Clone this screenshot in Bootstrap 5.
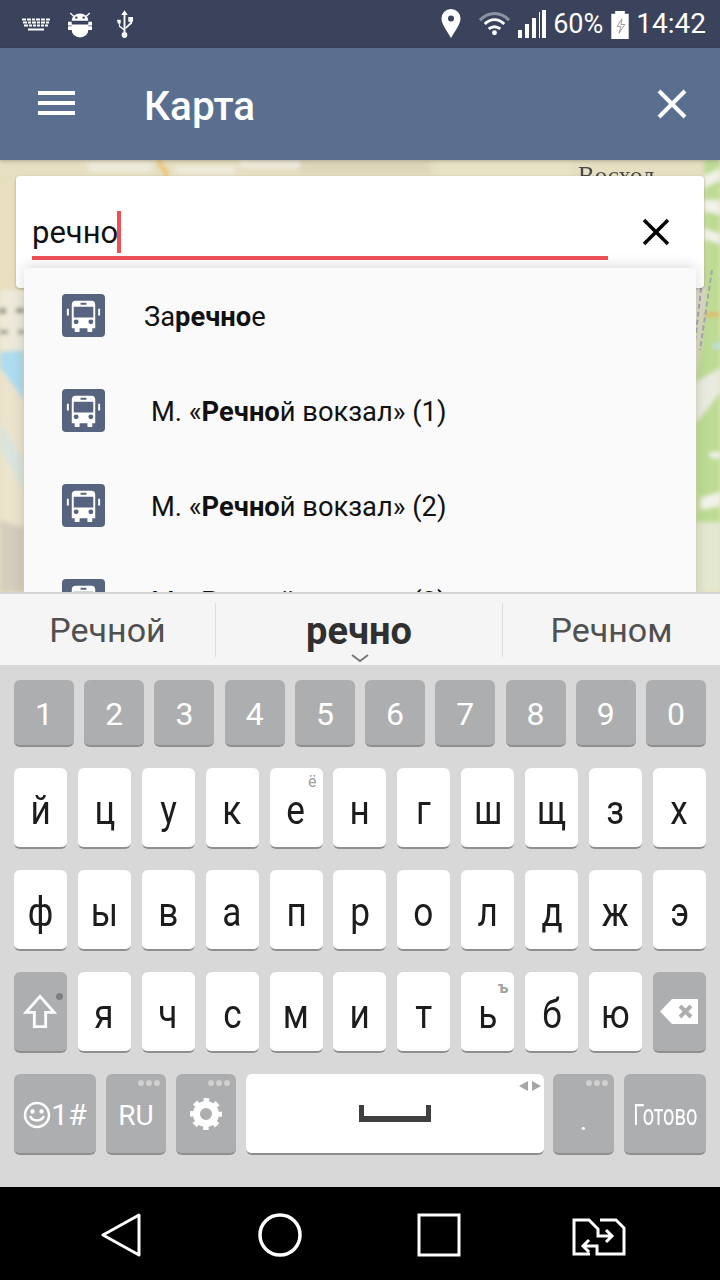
<!DOCTYPE html>
<html lang="ru"><head><meta charset="utf-8">
<link rel="stylesheet" href="https://cdn.jsdelivr.net/npm/bootstrap@5.3.0/dist/css/bootstrap.min.css">
<style>
html,body{margin:0;width:720px;height:1280px;overflow:hidden}
body{font-family:Roboto,sans-serif;background:#000}
.phone{width:720px;height:1280px;display:flex;flex-direction:column}
.statusbar{height:48px;background:#3b435c;color:#fff;padding:0 14px 0 22px;font-size:27px;flex:none}
.st-android{margin-left:18px}
.st-usb{margin-left:24px}
.st-pin{margin-right:17px}
.st-wifi{margin-right:7px}
.st-pct{margin:0 8px 0 7px}
.st-time{margin-left:7px;font-size:28px}
.appbar{height:112px;background:#5a6f90;color:#fff;flex:none;padding:0 33px 0 38px;position:relative;z-index:2;box-shadow:0 1px 4px rgba(0,0,0,.25)}
.appbar-title{font-size:40.500px;font-weight:500;margin-left:68px;line-height:1;padding-top:5px}
.mapzone{height:432px;flex:none;position:relative;overflow:hidden;background:#e6dfc0}
.mapart{position:absolute;inset:0;width:720px;height:432px}
.searchbox{position:absolute;left:16px;top:16px;width:688px;height:112px;background:#fff;border-radius:4px;box-shadow:0 1px 3px rgba(0,0,0,.25)}
.searchtext{position:absolute;left:16px;top:35px;font-size:31px;line-height:40px;color:#111}
.caret-bar{display:inline-block;width:4px;height:42px;background:#ee5056;vertical-align:-10px;margin-left:-1px}
.underline-bar{position:absolute;left:16px;top:80px;width:576px;height:4px;background:#ee5056}
.clear-x{position:absolute;left:626px;top:42px}
.suggest{position:absolute;left:24px;top:108px;width:672px;height:330px;background:#fafafa;border-radius:4px 4px 0 0;box-shadow:0 -2px 14px rgba(0,0,0,.14);padding:0;margin:0;flex-wrap:nowrap}
.sug-row{height:95px;flex:none;display:flex;align-items:center;padding:0 0 0 38px;border:0;background:transparent;font-size:27.300px;color:#111;border-radius:0}
.sug-row svg{flex:none;margin-top:-1px}
.sug-one{margin-left:39px;padding-top:4px}
.sug-two{margin-left:46px;padding-top:4px}
.predict{height:73px;background:#f5f5f5;border-top:2px solid #d4d4d4;flex:none;position:relative;color:#505050;font-size:34px}
.pred-cell{display:flex;align-items:center;justify-content:center;height:71px;padding-top:1px}
.pred-a{width:215px}
.pred-b{width:286px;font-weight:700;font-size:38px;color:#303030;padding-top:3px}
.pred-c{width:217px}
.pred-sep{width:1px;height:54px;background:#dedede;flex:none}
.pred-chev{position:absolute;left:351px;top:60px}
.kbd{height:522px;background:#d8d8d8;flex:none;padding-top:15px}
.keyrow{display:flex;height:81px;padding-left:14px}
.keyrow+.keyrow{margin-top:21.330px}
.keyrow.numrow{height:67px;gap:10.220px}
.numrow+.letrow.keyrow{margin-top:20.500px}
.kk{height:100%;flex:none;border-radius:6px;background:#fff;border-bottom:2px solid #8f8f8f;color:#1c1c1c;display:flex;align-items:center;justify-content:center;font-size:35px;position:relative;line-height:1}
.kk-g{background:#adaeb0;color:#fff}
.numrow .kk{width:60px;font-size:32px;padding-top:3px}
.letrow{gap:10.900px}
.letrow .kk{width:53px;padding-top:7px}
.lt{display:block;font-size:40px;transform:scaleX(.88)}
.botrow{gap:10px}
.bk-a{width:82px;font-size:30px;padding-top:2px}
.bk-b{width:60px;font-size:28px;padding-top:4px}
.bk-c{width:60px}
.bk-space{width:298px}
.bk-dot{width:61px;font-size:28px;padding-top:14px;margin-left:-1px}
.bk-go{width:82px;padding-top:3px}
.go-text{display:block;font-size:29px;transform:scaleX(.69);white-space:nowrap}
.corner{position:absolute;font-size:16px;color:#a0a0a0;top:6px;right:6px;line-height:1}
.corner-b{font-weight:700;top:8px}
.dots{position:absolute;top:6px;right:6px;display:flex;gap:2px}
.dots i{width:6px;height:6px;border-radius:50%;background:#d0d0d0;display:block}
.shift-ico{margin-top:-7px;margin-right:2px}
.shift-dot{position:absolute;right:4px;top:21px;width:7px;height:7px;border-radius:50%;background:#7f7f7f}
.back-ico{margin-top:-7px;margin-left:-1px}
.tri{position:absolute;right:3px;top:7px}
.navbarea{height:93px;background:#000;flex:none;position:relative}
.navico{position:absolute;top:26px}
.nv-a{left:101px}.nv-b{left:258px}.nv-c{left:417px}.nv-d{left:572px;top:31px}
</style></head><body>
<div class="phone">
<div class="statusbar d-flex align-items-center">
<svg width="28" height="15" viewBox="0 0 28 14" fill="#fff"><path d="M0 1h4v2H0zM5 1h4v2H5zM10 1h3v2h-3zM14 1h4v2h-4zM19 1h4v2h-4zM24 1h4v2h-4zM1 4h4v2H1zM6 4h3v2H6zM10 4h4v2h-4zM15 4h3v2h-3zM19 4h4v2h-4zM24 4h3v2h-3zM2 7h4v2H2zM7 7h3v2H7zM11 7h3v2h-3zM15 7h3v2h-3zM19 7h3v2h-3zM23 7h3v2h-3zM6 11h16v2H6z"/></svg>
<svg class="st-android" width="24" height="27" viewBox="0 0 26 28" fill="#fff"><path d="M3 1l4 4-1 1-4-4zM23 1l-4 4 1 1 4-4z"/><path d="M4 10a9 8 0 0 1 18 0z" /><path d="M0 11h4v3h18v-3h4v4h-4v1h4v4h-4a9 8 0 0 1-18 0H0v-4h4v-1H0z"/><circle cx="9" cy="6.500" r="1.300" fill="#3b435c"/><circle cx="17" cy="6.500" r="1.300" fill="#3b435c"/></svg>
<svg class="st-usb" width="17" height="29" viewBox="0 0 18 30" fill="#fff"><path d="M8 29V5H5.500L9 0l3.500 5H10v24z"/><circle cx="9" cy="26" r="3"/><path d="M1 10h4v4H4v2l5 4v2l-6-5v-3H2z" /><path d="M13 7h5v5h-1v2l-7 6v-2l5-5v-1h-2z"/></svg>
<div class="flex-grow-1"></div>
<svg class="st-pin" width="20" height="30" viewBox="0 0 20 30"><path fill="#fff" fill-rule="evenodd" d="M10 0a9.500 9.500 0 0 1 9.500 9.500C19.500 15 14 22 10 29 6 22 .5 15 .5 9.500A9.500 9.500 0 0 1 10 0zm0 6.500a3 3 0 1 0 0 6 3 3 0 0 0 0-6z"/></svg>
<svg class="st-wifi" width="33" height="26" viewBox="0 0 34 26" fill="none"><path d="M2 9C11 0 23 0 32 9" stroke="#8c93a4" stroke-width="3"/><path d="M7 13c6-6 14-6 20 0" stroke="#fff" stroke-width="3"/><path d="M11 18c4-3 8-3 12 0" stroke="#fff" stroke-width="3"/><circle cx="17" cy="22" r="2.500" fill="#fff"/></svg>
<svg width="28" height="28" viewBox="0 0 28 28" fill="#fff"><path d="M0 20h4v8H0zM7 14h4v14H7zM14 8h4v20h-4zM21 2h1v26h-1zM24 0h4v28h-4z"/></svg>
<span class="st-pct">60%</span>
<svg width="18" height="29" viewBox="0 0 18 30"><path fill="#fff" d="M4 1h10v3h4v26H0V4h4z"/><path fill="none" stroke="#9a9a9a" stroke-width="1" d="M11 9l-5 8h4l-2 7 6-9h-4z"/></svg>
<span class="st-time">14:42</span>
</div>
<div class="appbar d-flex align-items-center">
<svg width="38" height="26" viewBox="0 0 38 26" fill="#fff"><path d="M0 0h37v4H0zM0 10h37v4H0zM0 20h37v4H0z"/></svg>
<div class="appbar-title flex-grow-1">Карта</div>
<svg width="30" height="30" viewBox="0 0 30 30" stroke="#fff" stroke-width="4" fill="none"><path d="M2 2l26 26M28 2L2 28"/></svg>
</div>
<div class="mapzone">
<svg class="mapart" viewBox="0 0 720 432">
<defs><filter id="bl" x="-10%" y="-10%" width="120%" height="120%"><feGaussianBlur stdDeviation="2"/></filter><filter id="bt"><feGaussianBlur stdDeviation=".6"/></filter></defs>
<rect width="720" height="432" fill="#e7dfbd"/>
<g filter="url(#bl)">
<rect x="0" y="0" width="720" height="16" fill="#e6dfc2"/>
<path d="M90 12h60l5-10h-70zM175 14h60V6h-60zM240 0h60v8h-60z" fill="#eeeadc"/>
<path d="M300 0h130v14H300z" fill="#dfd6ba"/>
<path d="M440 0h130v16H440z" fill="#e9e3c6"/>
<path d="M158 0l10 16" stroke="#eec26e" stroke-width="5"/>
<path d="M0 130h24v60H0z" fill="#eeeadb"/>
<path d="M0 148h6v6H0zM0 170h8v4H0zM16 148h8v5h-8zM18 170h6v4h-6z" fill="#8c8c82"/>
<path d="M0 192C8 192 24 190 24 190V240L0 208z" fill="#aeddf0"/>
<path d="M0 208L24 240V365H0z" fill="#ece3cd"/>
<path d="M0 290L24 330V300L0 262z" fill="#d9e4de"/>
<path d="M0 360L24 368V432H0z" fill="#d5cdbd"/>
<path d="M704 0h16v432h-16zM696 128h8v304h-8z" fill="#bddb93"/>
<path d="M704 16l16-8v12l-16 8zM704 40h16v15l-16-4zM704 68l16 6v10l-16-5z" fill="#f1f2e8"/>
<path d="M696 128h10l-4 50-6 40z" fill="#ded8c8"/>
<path d="M704 153h16v3h-16z" fill="#eda24a"/>
<circle cx="716" cy="186" r="3" fill="#b6e0e6"/>
<path d="M696 222l24-14v24l-24 32z" fill="#e9ebe0"/>
<path d="M710 292h10v6h-10zM700 338l20-6v14l-20 4z" fill="#f2f3ea"/>
<path d="M696 362h24v70h-24z" fill="#e4e8d0"/>
</g>
<path d="M703 112l-8 70M712 110l-12 80" stroke="#a2a6b6" stroke-width="2" stroke-dasharray="5 3" fill="none" filter="url(#bt)"/>
<text x="578" y="24" font-family="Liberation Serif,serif" font-size="25" fill="#4a4a4a" filter="url(#bt)">Восход</text>
</svg>
<div class="searchbox">
<div class="searchtext">речно<span class="caret-bar"></span></div>
<div class="underline-bar"></div>
<svg class="clear-x" width="28" height="28" viewBox="0 0 28 28" stroke="#000" stroke-width="3.500" fill="none"><path d="M2 2l24 24M26 2L2 26"/></svg>
</div>
<div class="list-group suggest">
<div class="list-group-item sug-row"><svg width="43" height="43" viewBox="0 0 44 44"><use href="#busico"/></svg><span class="sug-one">За<b>речно</b>е</span></div>
<div class="list-group-item sug-row"><svg width="43" height="43" viewBox="0 0 44 44"><use href="#busico"/></svg><span class="sug-two">М. «<b>Речно</b>й вокзал» (1)</span></div>
<div class="list-group-item sug-row"><svg width="43" height="43" viewBox="0 0 44 44"><use href="#busico"/></svg><span class="sug-two">М. «<b>Речно</b>й вокзал» (2)</span></div>
<div class="list-group-item sug-row"><svg width="43" height="43" viewBox="0 0 44 44"><use href="#busico"/></svg><span class="sug-two">М. «<b>Речно</b>й вокзал» (3)</span></div>
</div>
</div>
<div class="predict d-flex align-items-center">
<div class="pred-cell pred-a">Речной</div><div class="pred-sep"></div>
<div class="pred-cell pred-b">речно</div><div class="pred-sep"></div>
<div class="pred-cell pred-c">Речном</div>
<svg class="pred-chev" width="18" height="9" viewBox="0 0 18 9" fill="none" stroke="#777" stroke-width="2"><path d="M1 1l8 6 8-6"/></svg>
</div>
<div class="kbd">
<div class="keyrow numrow">
<div class="kk kk-g">1</div><div class="kk kk-g">2</div><div class="kk kk-g">3</div><div class="kk kk-g">4</div><div class="kk kk-g">5</div><div class="kk kk-g">6</div><div class="kk kk-g">7</div><div class="kk kk-g">8</div><div class="kk kk-g">9</div><div class="kk kk-g">0</div>
</div>
<div class="keyrow letrow">
<div class="kk"><span class="lt">й</span></div><div class="kk"><span class="lt">ц</span></div><div class="kk"><span class="lt">у</span></div><div class="kk"><span class="lt">к</span></div><div class="kk"><span class="lt">е</span><span class="corner">ё</span></div><div class="kk"><span class="lt">н</span></div><div class="kk"><span class="lt">г</span></div><div class="kk"><span class="lt">ш</span></div><div class="kk"><span class="lt">щ</span></div><div class="kk"><span class="lt">з</span></div><div class="kk"><span class="lt">х</span></div>
</div>
<div class="keyrow letrow">
<div class="kk"><span class="lt">ф</span></div><div class="kk"><span class="lt">ы</span></div><div class="kk"><span class="lt">в</span></div><div class="kk"><span class="lt">а</span></div><div class="kk"><span class="lt">п</span></div><div class="kk"><span class="lt">р</span></div><div class="kk"><span class="lt">о</span></div><div class="kk"><span class="lt">л</span></div><div class="kk"><span class="lt">д</span></div><div class="kk"><span class="lt">ж</span></div><div class="kk"><span class="lt">э</span></div>
</div>
<div class="keyrow letrow">
<div class="kk kk-g"><svg class="shift-ico" width="34" height="37" viewBox="0 0 36 38" fill="none" stroke="#fff" stroke-width="3"><path d="M18 3L3 20h9v15h12V20h9z"/></svg><span class="shift-dot"></span></div>
<div class="kk"><span class="lt">я</span></div><div class="kk"><span class="lt">ч</span></div><div class="kk"><span class="lt">с</span></div><div class="kk"><span class="lt">м</span></div><div class="kk"><span class="lt">и</span></div><div class="kk"><span class="lt">т</span></div><div class="kk"><span class="lt">ь</span><span class="corner corner-b">ъ</span></div><div class="kk"><span class="lt">б</span></div><div class="kk"><span class="lt">ю</span></div>
<div class="kk kk-g"><svg class="back-ico" width="38" height="25" viewBox="0 0 38 25"><path fill="#fff" d="M12 0h26v25H12L0 12.500z"/><path d="M20 7l11 11M31 7L20 18" stroke="#adaeb0" stroke-width="4"/></svg></div>
</div>
<div class="keyrow botrow">
<div class="kk kk-g bk-a"><svg width="28" height="28" viewBox="0 0 28 28" fill="none" stroke="#fff" stroke-width="2.500"><circle cx="14" cy="14" r="12"/><path d="M7 15c3 6 11 6 14 0"/><circle cx="9.500" cy="10.500" r="1" fill="#fff"/><circle cx="18.500" cy="10.500" r="1" fill="#fff"/></svg>1#</div>
<div class="kk kk-g bk-b">RU<span class="dots"><i></i><i></i><i></i></span></div>
<div class="kk kk-g bk-c"><svg width="32" height="32" viewBox="0 0 32 32" fill="none"><circle cx="16" cy="16" r="9.500" stroke="#fff" stroke-width="7"/><circle cx="16" cy="16" r="13.500" stroke="#fff" stroke-width="5" stroke-dasharray="5.300 5.300" stroke-dashoffset="2.650"/></svg><span class="dots"><i></i><i></i><i></i></span></div>
<div class="kk bk-space"><svg width="72" height="17" viewBox="0 0 72 17" fill="#3f3f3f"><path d="M0 0h5v11h62V0h5v17H0z"/></svg><svg class="tri" width="22" height="10" viewBox="0 0 22 10" fill="#a6a6a6"><path d="M9 0v10L0 5zM13 0v10l9-5z"/></svg></div>
<div class="kk kk-g bk-dot">.<span class="dots"><i></i><i></i><i></i></span></div>
<div class="kk kk-g bk-go"><span class="go-text">Готово</span></div>
</div>
</div>
<div class="navbarea">
<svg class="navico nv-a" width="42" height="44" viewBox="0 0 42 44" fill="none" stroke="#fff" stroke-width="3"><path d="M38 2L2 22l36 20z" stroke-linejoin="round"/></svg>
<svg class="navico nv-b" width="44" height="44" viewBox="0 0 44 44" fill="none" stroke="#fff" stroke-width="3.500"><ellipse cx="22" cy="22" rx="20" ry="20"/></svg>
<svg class="navico nv-c" width="44" height="44" viewBox="0 0 44 44" fill="none" stroke="#fff" stroke-width="3"><rect x="2" y="2" width="40" height="40"/></svg>
<svg class="navico nv-d" width="54" height="38" viewBox="0 0 54 38" fill="none" stroke="#fff" stroke-width="3"><path d="M18 36H2V2H17L26 11V18H39M34 12l6 6-6 6M28 2H44L52 10V36H25V28H12M17 22l-6 6 6 6"/></svg>
</div>
</div>
<svg width="0" height="0" class="position-absolute"><defs><g id="busico"><rect width="44" height="44" rx="4" fill="#56647f"/><path fill="#fff" fill-rule="evenodd" d="M14 7h16a4 4 0 0 1 4 4v24h-3v3a1 1 0 0 1-1 1h-3a1 1 0 0 1-1-1v-3H18v3a1 1 0 0 1-1 1h-3a1 1 0 0 1-1-1v-3h-3V11a4 4 0 0 1 4-4zm5 2v2h6V9zM12 13v11h20V13zm2.500 13a2.500 2.500 0 1 0 0 5 2.500 2.500 0 0 0 0-5zm15 0a2.500 2.500 0 1 0 0 5 2.500 2.500 0 0 0 0-5z"/><path fill="#fff" d="M5 15h2v7H5zM37 15h2v7h-2z"/></g></defs></svg>
<script src="https://cdn.jsdelivr.net/npm/bootstrap@5.3.0/dist/js/bootstrap.bundle.min.js"></script>
</body></html>
